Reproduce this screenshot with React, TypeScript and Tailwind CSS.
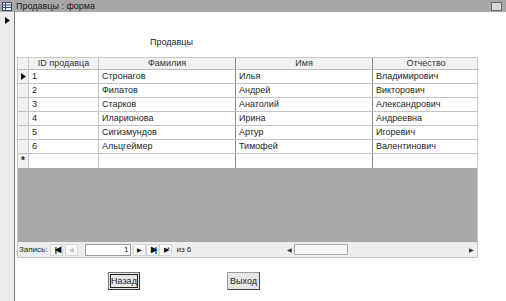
const rows = [
  ["1", "Стронагов", "Илья", "Владимирович"],
  ["2", "Филатов", "Андрей", "Викторович"],
  ["3", "Старков", "Анатолий", "Александрович"],
  ["4", "Иларионова", "Ирина", "Андреевна"],
  ["5", "Сигизмундов", "Артур", "Игоревич"],
  ["6", "Альцгеймер", "Тимофей", "Валентинович"],
];

const cols = "grid grid-cols-[11px_70px_137px_137px_106px]";

const Tri = ({ className = "" }: { className?: string }) => (
  <svg width="5" height="7" viewBox="0 0 5 7" className={className}>
    <path d="M0 0 L5 3.5 L0 7 Z" fill="#111" />
  </svg>
);

const NavBtn = ({ children, dim = false }: { children: React.ReactNode; dim?: boolean }) => (
  <div
    className={`w-[13px] h-[12px] flex items-center justify-center border border-[#d6d6d6] bg-[#f7f7f7] ${
      dim ? "text-[#bdbdbd]" : "text-[#111]"
    }`}
  >
    {children}
  </div>
);

const App = () => {
  return (
    <div
      className="w-[506px] h-[301px] overflow-hidden bg-white flex flex-col text-[#1e1e1e]"
      style={{ fontFamily: '"Liberation Sans", Arial, sans-serif' }}
    >
      {/* заголовок окна */}
      <div className="h-[12px] bg-[#a7a7a7] flex items-center pl-[2px] pr-[4px] shrink-0">
        <svg width="10" height="9" viewBox="0 0 10 9" className="shrink-0">
          <rect x="0.5" y="0.5" width="9" height="8" fill="#e8eef8" stroke="#3a4a6a" />
          <path d="M0.5 3 H9.5 M0.5 5.5 H9.5 M3.5 0.5 V8.5" stroke="#3a4a6a" strokeWidth="1" />
        </svg>
        <span className="ml-[4px] text-[9px] leading-none text-[#1a1a1a]">Продавцы : форма</span>
        <div className="ml-auto w-[11px] h-[9px] border border-[#6a6a6a] bg-[#d8d8d8]" />
      </div>

      <div className="flex flex-1 min-h-0">
        {/* область выделения */}
        <div className="w-[15px] bg-[#ececec] border-r border-[#777] flex justify-center pt-[5px] shrink-0">
          <Tri />
        </div>

        <div className="flex-1 flex flex-col">
          <div className="ml-[135px] mt-[26px] h-[19px] text-[9px] leading-none">Продавцы</div>

          {/* таблица */}
          <div className="ml-[2px] w-[461px] flex flex-col border border-[#c8c8c8]">
            <div className={`${cols} h-[12px] bg-[#f1f1f1] border-b border-[#bcbcbc] text-[9px] leading-none text-[#333]`}>
              <div className="border-r border-[#c8c8c8]" />
              <div className="flex items-center justify-center border-r border-[#c8c8c8]">ID продавца</div>
              <div className="flex items-center justify-center border-r border-[#8a8a8a]">Фамилия</div>
              <div className="flex items-center justify-center border-r border-[#8a8a8a]">Имя</div>
              <div className="flex items-center justify-center">Отчество</div>
            </div>

            {rows.map((r, i) => (
              <div key={r[0]} className={`${cols} h-[14px] border-b border-[#c4c4c4] text-[9px] leading-none`}>
                <div className="bg-[#f0f0f0] border-r border-[#c4c4c4] flex items-center justify-center">
                  {i === 0 && <Tri />}
                </div>
                <div className="flex items-center pl-[3px] border-r border-[#c4c4c4]">{r[0]}</div>
                <div className="flex items-center pl-[3px] border-r border-[#8a8a8a]">{r[1]}</div>
                <div className="flex items-center pl-[3px] border-r border-[#8a8a8a]">{r[2]}</div>
                <div className="flex items-center pl-[3px]">{r[3]}</div>
              </div>
            ))}

            <div className={`${cols} h-[14px] text-[9px] leading-none`}>
              <div className="bg-[#f0f0f0] border-r border-[#c4c4c4] flex items-center justify-center text-[10px] font-bold">
                *
              </div>
              <div className="border-r border-[#c4c4c4]" />
              <div className="border-r border-[#8a8a8a]" />
              <div className="border-r border-[#8a8a8a]" />
              <div />
            </div>

            <div className="h-[74px] bg-[#a8a8a8]" />

            {/* навигация по записям */}
            <div className="h-[15px] bg-[#ededed] flex items-center text-[8px] leading-none text-[#222] pl-[1px]">
              <span className="mr-[3px]">Запись:</span>
              <NavBtn>
                <span className="text-[8px] font-bold tracking-[-2px]">|◀</span>
              </NavBtn>
              <div className="ml-[2px]">
                <NavBtn dim>
                  <span className="text-[6px]">◀</span>
                </NavBtn>
              </div>
              <div className="ml-[7px] w-[46px] h-[12px] bg-white border border-[#9a9a9a] flex items-center justify-end pr-[2px]">
                1
              </div>
              <div className="ml-[2px]">
                <NavBtn>
                  <span className="text-[6px]">▶</span>
                </NavBtn>
              </div>
              <NavBtn>
                <span className="text-[8px] font-bold tracking-[-2px]">▶|</span>
              </NavBtn>
              <NavBtn>
                <span className="text-[7px] tracking-[-2px]">▶*</span>
              </NavBtn>
              <span className="ml-[4px]">из 6</span>

              <div className="ml-auto w-[192px] h-[12px] flex items-center mr-[1px]">
                <span className="text-[6px] text-[#333] w-[10px] text-center">◀</span>
                <div className="w-[54px] h-[11px] bg-[#f8f8f8] border border-[#a8a8a8] rounded-[1px]" />
                <div className="flex-1" />
                <span className="text-[6px] text-[#333] w-[10px] text-center">▶</span>
              </div>
            </div>
          </div>

          {/* кнопки */}
          <div className="flex mt-[14px] text-[9px] leading-none">
            <button className="ml-[93px] w-[32px] h-[18px] bg-[#e6e6e6] border border-[#777] border-b-[#333] border-r-[#333] outline outline-1 outline-[#222] -outline-offset-[3px] flex items-center justify-center">
              Назад
            </button>
            <button className="ml-[87px] w-[33px] h-[18px] bg-[#e6e6e6] border border-[#999] border-b-[#444] border-r-[#444] flex items-center justify-center">
              Выход
            </button>
          </div>
        </div>
      </div>
    </div>
  );
};

export default App;
